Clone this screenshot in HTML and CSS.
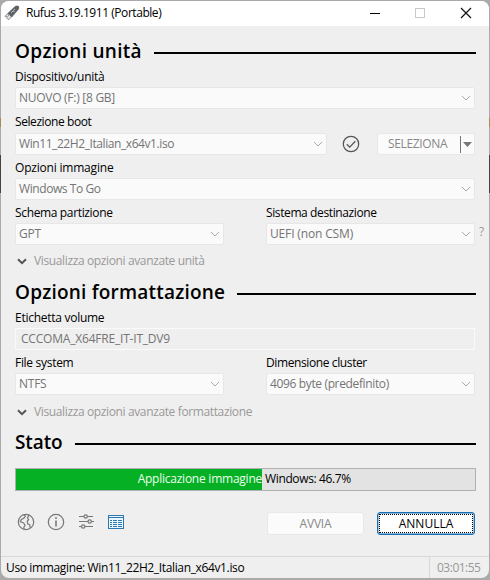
FILE: index.html
```html
<!DOCTYPE html>
<html lang="it">
<head>
<meta charset="utf-8">
<title>Rufus 3.19.1911 (Portable)</title>
<link rel="stylesheet" href="styles.css">
</head>
<body>
<svg width="0" height="0" class="defs">
  <symbol id="chev" viewBox="0 0 10 6"><path d="M1 1l4 4 4-4" fill="none" stroke="currentColor"/></symbol>
  <symbol id="bold-chev" viewBox="0 0 10 7"><path d="M1 1.2l4 4 4-4" fill="none" stroke="currentColor" stroke-width="2"/></symbol>
</svg>
<main class="window">
  <header class="titlebar">
    <svg class="usb" width="17" height="16" viewBox="0 0 17 16">
      <path d="M1 11.2L4.2 8l3.6 3.6-3.2 3.2z" fill="#ddd" stroke="#777" stroke-width=".8"/>
      <path d="M4 8.2L11 1.6q1-.9 2.4-.6l1.2.3q.6 1.9-.2 3L7.8 12z" fill="#606366" stroke="#444" stroke-width=".5"/>
      <path d="M7 8l4-4M9 6l1.6.4" stroke="#bbb" stroke-width="1" fill="none"/>
      <path d="M2.8 11.2l.8.8M4.2 9.9l.8.8" stroke="#555"/>
    </svg>
    <h1 class="title"><span class="t-title">Rufus 3.19.1911 (Portable)</span></h1>
    <svg class="controls" width="104" height="12" viewBox="0 0 104 12" fill="none">
      <path d="M1 6.5h10" stroke="#000"/>
      <rect x="46.5" y="1.5" width="9" height="9" stroke="#c8c8c8"/>
      <path d="M92 1l10 10M102 1L92 11" stroke="#111" stroke-width="1.2"/>
    </svg>
  </header>

  <section class="drive">
    <h2 class="heading"><span class="h-drive">Opzioni unità</span></h2>
    <div class="label first"><span class="l-device">Dispositivo/unità</span></div>
    <div class="combo"><span class="v-device">NUOVO (F:) [8 GB]</span><svg class="chev"><use href="#chev"/></svg></div>
    <div class="label boot"><span class="l-boot">Selezione boot</span></div>
    <div class="boot-row">
      <div class="combo"><span class="v-boot">Win11_22H2_Italian_x64v1.iso</span><svg class="chev"><use href="#chev"/></svg></div>
      <svg class="check" width="18" height="18" viewBox="0 0 18 18" fill="none" stroke="#555" stroke-width="1.25"><circle cx="9" cy="9" r="7.7"/><path d="M4.8 9.2l2.9 2.9 5.6-5.8"/></svg>
      <div class="button split"><span class="b-select">SELEZIONA</span><i class="split-line"></i><svg width="9" height="5" viewBox="0 0 9 5"><path d="M0 0h9L4.5 5z" fill="#777"/></svg></div>
    </div>
    <div class="label"><span class="l-image">Opzioni immagine</span></div>
    <div class="combo"><span class="v-image">Windows To Go</span><svg class="chev"><use href="#chev"/></svg></div>
    <div class="pair">
      <div><div class="label"><span class="l-scheme">Schema partizione</span></div><div class="combo"><span class="v-gpt">GPT</span><svg class="chev"><use href="#chev"/></svg></div></div>
      <div><div class="label"><span class="l-target">Sistema destinazione</span></div><div class="combo"><span class="v-uefi">UEFI (non CSM)</span><svg class="chev"><use href="#chev"/></svg></div></div>
      <span class="help">?</span>
    </div>
    <div class="advanced"><svg class="bold-chev"><use href="#bold-chev"/></svg><span>Visualizza opzioni avanzate unità</span></div>
  </section>

  <section class="format">
    <h2 class="heading"><span class="h-format">Opzioni formattazione</span></h2>
    <div class="label first"><span class="l-volume">Etichetta volume</span></div>
    <div class="field"><span class="v-volume">CCCOMA_X64FRE_IT-IT_DV9</span></div>
    <div class="pair">
      <div><div class="label"><span class="l-fs">File system</span></div><div class="combo"><span class="v-ntfs">NTFS</span><svg class="chev"><use href="#chev"/></svg></div></div>
      <div><div class="label"><span class="l-cluster">Dimensione cluster</span></div><div class="combo"><span class="v-cluster">4096 byte (predefinito)</span><svg class="chev"><use href="#chev"/></svg></div></div>
    </div>
    <div class="advanced"><svg class="bold-chev"><use href="#bold-chev"/></svg><span>Visualizza opzioni avanzate formattazione</span></div>
  </section>

  <section class="status">
    <h2 class="heading"><span class="h-status">Stato</span></h2>
    <div class="progress">
      <span class="done">Applicazione immagine</span><span class="remaining">Windows: 46.7%</span>
    </div>
    <div class="actions">
      <svg class="tool" width="18" height="18" viewBox="0 0 18 18" fill="none" stroke="#777" stroke-width="1.2"><circle cx="9" cy="9" r="7.7"/><path d="M7 1.7L8.3 3 6.8 5.2 4.4 6.4 3.3 8.7 6.6 10 8.1 12.2 6.8 14.3 7.2 16.5M12.2 2.2L10.4 4.7 11.6 6.7 10.2 8.5 10.7 10.8 12.8 11.8 13.1 14.9"/></svg>
      <svg class="tool" width="18" height="18" viewBox="0 0 18 18" fill="none" stroke="#777" stroke-width="1.2"><circle cx="9" cy="9" r="7.7"/><path d="M9 7.5v6M9 4.3v1.8" stroke-width="1.6"/></svg>
      <svg class="tool" width="18" height="18" viewBox="0 0 18 18" fill="none" stroke="#777" stroke-width="1.2"><path d="M2 3.5h5M10.5 3.5H16M2 8.5h9M14.5 8.5H17M2 13.5h2.5M8 13.5h8"/><circle cx="8.7" cy="3.5" r="1.7"/><circle cx="12.7" cy="8.5" r="1.7"/><circle cx="6.2" cy="13.5" r="1.7"/></svg>
      <svg class="tool" width="18" height="18" viewBox="0 0 18 18" fill="none" stroke="#2f78b0"><rect x="1.5" y="2.5" width="15" height="13" fill="#eaf6ff"/><path d="M2 4.5h14"/><path d="M3 7.5h2M6 7.5h4M11 7.5h4M3 9.5h2M6 9.5h4M11 9.5h4M3 11.5h2M6 11.5h4M11 11.5h4M3 13.5h2M6 13.5h4M11 13.5h4"/></svg>
      <div class="button start"><span>AVVIA</span></div>
      <div class="button cancel"><span>ANNULLA</span></div>
    </div>
  </section>
  <footer class="statusbar"><div class="message"><span class="s-message">Uso immagine: Win11_22H2_Italian_x64v1.iso</span></div><div class="timer"><span class="s-time">03:01:55</span></div></footer>
</main>
</body>
</html>
```
FILE: styles.css
```css
* { box-sizing: border-box; }
body {
  margin: 0;
  width: 490px;
  height: 580px;
  padding: 1px 1px 2px;
  background: linear-gradient(#aaa 0 118px, #a78b50 118px 127px, #aaa 127px 155px, #444 155px 193px, #aaa 193px);
  font: 12px/16px "Open Sans", "Noto Sans", sans-serif;
  color: #000;
  overflow: hidden;
}
.defs { display: none; }
span { white-space: nowrap; }
.window {
  height: 577px;
  background: #efefef;
  border-radius: 8px;
  overflow: hidden;
  display: flex;
  flex-direction: column;
}
.titlebar {
  height: 25px;
  flex: none;
  background: #fff;
  display: flex;
  align-items: center;
  padding: 0 16px 1px 3px;
}
.title { font: inherit; margin: 0 auto 0 5px; }
.drive { height: 250px; padding: 13px 14px 0; }
.format { height: 151px; padding: 4px 14px 0; }
.status { height: 129px; padding: 3px 14px 0; }
.heading {
  height: 24px;
  margin: 0;
  display: flex;
  align-items: center;
  font: 600 19px/24px "Open Sans", sans-serif;
}
.heading::after {
  content: "";
  height: 2px;
  flex: 1;
  background: #000;
  margin: 4px -1px 0 12px;
}
.label { height: 23px; line-height: 16px; padding-top: 5px; }
.label.first { height: 24px; padding-top: 6px; }
.label.boot { height: 24px; }
.combo {
  height: 22px;
  background: #fafafa;
  border: 1px solid #e7e7e7;
  border-radius: 2px;
  color: #747474;
  padding: 0 3px;
  display: flex;
  align-items: center;
  justify-content: space-between;
}
.chev { width: 10px; height: 6px; color: #aaa; }
.boot-row { display: flex; align-items: center; height: 22px; }
.boot-row .combo { width: 312px; }
.check { margin: 0 17px 0 15px; }
.button {
  height: 23px;
  background: #fbfbfb;
  border: 1px solid #e8e8e8;
  border-radius: 3px;
  color: #888;
  display: flex;
  align-items: center;
  justify-content: center;
}
.split { flex: 1; height: 22px; justify-content: flex-start; padding-left: 10px; }
.split-line { width: 1px; height: 17px; background: #777; margin: 0 2px 0 auto; }
.split svg { margin-right: 2px; }
.pair { display: grid; grid-template-columns: 209px 209px; column-gap: 42px; position: relative; }
.help { position: absolute; left: 464px; top: 24px; height: 16px; color: #999; }
.advanced { height: 16px; margin-top: 8px; display: flex; align-items: center; color: #999; letter-spacing: -.37px; }
.format .advanced { margin-top: 9px; }
.bold-chev { width: 10px; height: 7px; margin: 0 7px 0 2px; color: #555; }
.field {
  height: 22px;
  border: 1px solid #fafafa;
  color: #747474;
  padding: 2px 5px 0;
  line-height: 16px;
}
.progress {
  height: 23px;
  width: 461px;
  margin-top: 14px;
  border: 1px solid #b0b0b0;
  background: linear-gradient(90deg, #06b025 0 246px, #e3e3e3 246px);
  line-height: 20px;
  display: flex;
}
.done { width: 246px; text-align: right; color: #e9ffec; letter-spacing: -.24px; }
.remaining { padding-left: 3px; letter-spacing: -.36px; }
.actions { display: flex; align-items: center; gap: 12px; height: 23px; margin-top: 21px; padding-left: 2px; }
.tool { margin-bottom: 3px; }
.start { width: 97px; margin-left: 130px; letter-spacing: -.2px; }
.cancel {
  width: 98px;
  margin-left: 1px;
  background: #fff;
  border: 1px solid #176fb5;
  box-shadow: inset 0 0 0 .4px #176fb5;
  color: #000;
  padding: 1px;
}
.cancel span { flex: 1; height: 19px; line-height: 17px; text-align: center; border: 1px dotted #000; }
.statusbar { flex: 1; border-top: 1px solid #d8d8d8; display: flex; }
.message { width: 429px; border-right: 1px solid #d8d8d8; padding: 3px 0 0 5px; }
.timer { padding: 3px 0 0 7px; color: #999; }

/* Tracking */
.t-title { letter-spacing: -.45px; }
.h-drive { letter-spacing: .3px; }
.h-format { letter-spacing: .2px; }
.h-status { letter-spacing: -.1px; }
.l-device, .l-fs { letter-spacing: -.3px; }
.v-device, .l-volume { letter-spacing: -.27px; }
.l-boot, .v-boot, .v-image { letter-spacing: -.42px; }
.l-image, .v-volume { letter-spacing: -.2px; }
.l-scheme, .b-select { letter-spacing: -.35px; }
.l-target, .l-cluster { letter-spacing: -.39px; }
.v-gpt, .v-ntfs { letter-spacing: -.25px; }
.v-uefi { letter-spacing: -.15px; }
.v-cluster, .s-message { letter-spacing: -.36px; }
.s-time { letter-spacing: -.5px; }
```
